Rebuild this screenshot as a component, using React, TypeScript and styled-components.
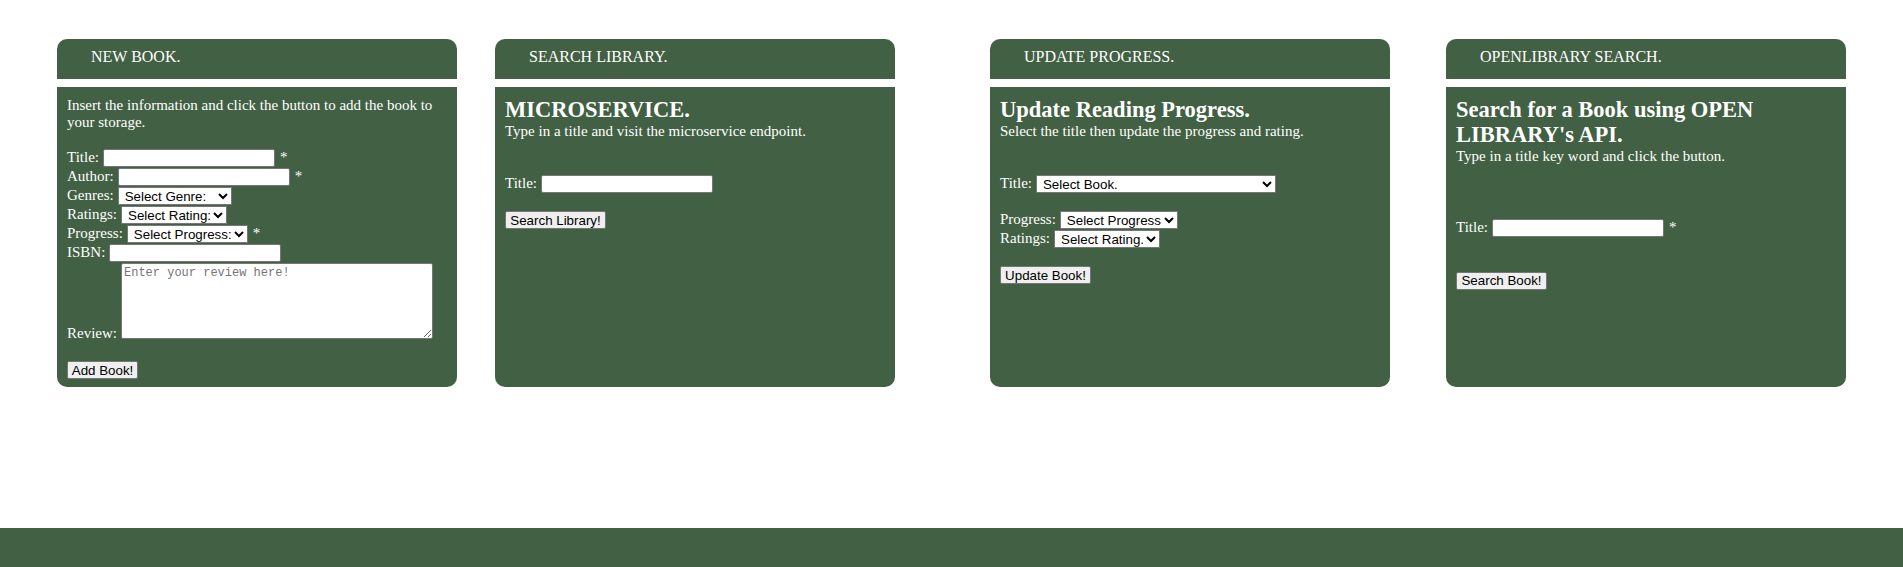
import styled, { createGlobalStyle } from 'styled-components'

const green = '#426043'

const GlobalStyle = createGlobalStyle`
  html, body {
    margin: 0;
    padding: 0;
  }
  body {
    font-family: "Liberation Serif", "Times New Roman", serif;
    font-size: 15px;
    line-height: 1.15;
    color: #ffffff;
    background: #ffffff;
  }
`

export default function App() {
  return (
    <Page>
      <GlobalStyle />
      <Main>
        <Card $offset={57}>
          <CardHeader>NEW BOOK.</CardHeader>
          <CardBody>
            <Text>Insert the information and click the button to add the book to your storage.</Text>
            <Row $mt={17.75}>
              <span>Title:</span>
              <TextInput type="text" />
              <Star>*</Star>
            </Row>
            <Row>
              <span>Author:</span>
              <TextInput type="text" />
              <Star>*</Star>
            </Row>
            <Row>
              <span>Genres:</span>
              <Select $w={114} defaultValue="">
                <option value="">Select Genre:</option>
              </Select>
            </Row>
            <Row>
              <span>Ratings:</span>
              <Select $w={106} defaultValue="">
                <option value="">Select Rating:</option>
              </Select>
            </Row>
            <Row>
              <span>Progress:</span>
              <Select $w={121} defaultValue="">
                <option value="">Select Progress:</option>
              </Select>
              <Star>*</Star>
            </Row>
            <Row>
              <span>ISBN:</span>
              <TextInput type="text" />
            </Row>
            <ReviewRow>
              <ReviewLabel>Review:</ReviewLabel>
              <Review placeholder="Enter your review here!" />
            </ReviewRow>
            <Button $w={71} $mt={22.5}>Add Book!</Button>
          </CardBody>
        </Card>

        <Card $offset={38}>
          <CardHeader>SEARCH LIBRARY.</CardHeader>
          <CardBody>
            <Heading>MICROSERVICE.</Heading>
            <Text>Type in a title and visit the microservice endpoint.</Text>
            <Row $mt={35.5}>
              <span>Title:</span>
              <TextInput type="text" />
            </Row>
            <Button $w={101} $mt={17}>Search Library!</Button>
          </CardBody>
        </Card>

        <Card $offset={95}>
          <CardHeader>UPDATE PROGRESS.</CardHeader>
          <CardBody>
            <Heading>Update Reading Progress.</Heading>
            <Text>Select the title then update the progress and rating.</Text>
            <Row $mt={35.5}>
              <span>Title:</span>
              <Select $w={240} defaultValue="">
                <option value="">Select Book.</option>
              </Select>
            </Row>
            <Row $mt={17}>
              <span>Progress:</span>
              <Select $w={118} defaultValue="">
                <option value="">Select Progress</option>
              </Select>
            </Row>
            <Row>
              <span>Ratings:</span>
              <Select $w={106} defaultValue="">
                <option value="">Select Rating.</option>
              </Select>
            </Row>
            <Button $w={91} $mt={17}>Update Book!</Button>
          </CardBody>
        </Card>

        <Card $offset={56}>
          <CardHeader>OPENLIBRARY SEARCH.</CardHeader>
          <CardBody>
            <Heading>Search for a Book using OPEN LIBRARY's API.</Heading>
            <Text>Type in a title key word and click the button.</Text>
            <Row $mt={54}>
              <span>Title:</span>
              <TextInput type="text" />
              <Star>*</Star>
            </Row>
            <Button $w={91} $mt={34}>Search Book!</Button>
          </CardBody>
        </Card>
      </Main>
      <Footer />
    </Page>
  )
}

const Page = styled.div`
  min-height: 100vh;
  display: flex;
  flex-direction: column;
`

const Main = styled.main`
  display: flex;
  align-items: stretch;
  padding-top: 39px;
`

const Card = styled.section<{ $offset: number }>`
  width: 400px;
  flex: 0 0 400px;
  margin-left: ${p => p.$offset}px;
  display: flex;
  flex-direction: column;
`

const CardHeader = styled.div`
  height: 40px;
  box-sizing: border-box;
  background: ${green};
  border-radius: 10px 10px 0 0;
  padding: 9px 34px 0;
  font-size: 16px;
  line-height: 18px;
`

const CardBody = styled.div`
  flex: 1;
  margin-top: 8px;
  background: ${green};
  border-radius: 0 0 10px 10px;
  padding: 9.5px 10px 8px;
  display: flex;
  flex-direction: column;
  align-items: flex-start;
`

const Heading = styled.h2`
  margin: 0 0 1px;
  font-size: 22.5px;
  line-height: 25px;
  font-weight: 700;
`

const Text = styled.p`
  margin: 0;
`

const Row = styled.div<{ $mt?: number }>`
  display: flex;
  align-items: flex-start;
  gap: 4px;
  height: 19px;
  margin-top: ${p => p.$mt ?? 0}px;
  white-space: nowrap;
`

const Star = styled.span`
  margin-left: 1px;
`

const TextInput = styled.input`
  width: 172px;
  height: 18px;
  box-sizing: border-box;
  margin: 0;
  padding: 1px 2px;
  border: 1px solid #767676;
  border-radius: 2px;
  background: #ffffff;
  font: 13.333px "Liberation Sans", Arial, sans-serif;
`

const Select = styled.select<{ $w: number }>`
  width: ${p => p.$w}px;
  height: 18px;
  box-sizing: border-box;
  margin: 0;
  padding: 0 0 0 2px;
  border: 1px solid #767676;
  border-radius: 0;
  background-color: #ffffff;
  color: #000000;
  font: 13.333px "Liberation Sans", Arial, sans-serif;
`

const ReviewRow = styled.div`
  display: flex;
  align-items: flex-end;
  gap: 4px;
`

const ReviewLabel = styled.span`
  line-height: 15px;
  margin-bottom: -2px;
`

const Review = styled.textarea`
  width: 312px;
  height: 76px;
  box-sizing: border-box;
  margin: 0;
  padding: 2px;
  border: 1px solid #767676;
  border-radius: 2px;
  background: #ffffff;
  font: 12px "Liberation Mono", "Courier New", monospace;

  ::placeholder {
    color: #757575;
  }
`

const Button = styled.button<{ $w: number; $mt: number }>`
  width: ${p => p.$w}px;
  height: 18px;
  box-sizing: border-box;
  margin: ${p => p.$mt}px 0 0;
  padding: 0;
  border: 1px solid #767676;
  border-radius: 2px;
  background: #efefef;
  color: #000000;
  font: 13.333px "Liberation Sans", Arial, sans-serif;
  line-height: 15px;
  cursor: pointer;
`

const Footer = styled.footer`
  margin-top: auto;
  height: 39px;
  background: ${green};
`
